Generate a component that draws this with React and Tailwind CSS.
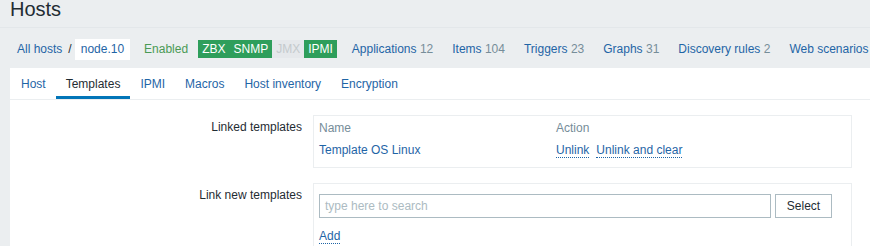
import React from 'react';

const links = [
  ['Applications', '12'],
  ['Items', '104'],
  ['Triggers', '23'],
  ['Graphs', '31'],
  ['Discovery rules', '2'],
  ['Web scenarios', '1'],
];

const tabs = ['Host', 'Templates', 'IPMI', 'Macros', 'Host inventory', 'Encryption'];

export default function App() {
  return (
    <div
      className="w-[870px] h-[246px] overflow-hidden bg-[#ebeef0] text-[12px] leading-[14px] text-[#1f2c33]"
      style={{ fontFamily: '"Liberation Sans", Arial, sans-serif' }}
    >
      {/* title */}
      <div className="h-[28px] border-b border-[#e3e7ea] pl-[10px]">
        <h1 className="text-[20px] leading-[18px] font-normal">Hosts</h1>
      </div>

      {/* breadcrumb + host nav */}
      <div className="h-[40px] pt-[2px] pl-[17px] flex items-center whitespace-nowrap">
        <span className="text-[#1f65a6]">All hosts</span>
        <span className="ml-[6px] mr-[3px] text-[#1f2c33]">/</span>
        <span className="bg-white px-[6px] leading-[21px] text-[#1f65a6]">node.10</span>
        <span className="ml-[14px] text-[#4a9a55]">Enabled</span>
        <div className="ml-[10px] flex leading-[18px] text-white">
          <span className="bg-[#2e9e5b] px-[4px]">ZBX</span>
          <span className="bg-[#2e9e5b] px-[4px]">SNMP</span>
          <span className="bg-[#e5e8eb] px-[4px] text-[#c4cacd]">JMX</span>
          <span className="bg-[#2e9e5b] px-[4px]">IPMI</span>
        </div>
        {links.map(([name, count], i) => (
          <span key={name} className={i === 0 ? 'ml-[15px]' : 'ml-[19px]'}>
            <span className="text-[#1f65a6]">{name}</span>{' '}
            <span className="text-[#768d99]">{count}</span>
          </span>
        ))}
      </div>

      {/* main white panel */}
      <div className="ml-[10px] bg-white h-[200px]">
        <ul className="flex pl-[1px] border-b border-[#ebeef0]">
          {tabs.map((t) => (
            <li
              key={t}
              className={`px-[10px] pt-[9px] pb-[5px] border-b-[3px] ${
                t === 'Templates' ? 'border-[#0275b8] text-[#1f2c33]' : 'border-transparent text-[#1f65a6]'
              }`}
            >
              {t}
            </li>
          ))}
        </ul>

        <div className="pt-[15px] flex flex-col gap-[15px]">
          {/* linked templates */}
          <div className="flex">
            <div className="w-[292px] text-right pt-[5px]">Linked templates</div>
            <div className="ml-[11px] w-[539px] border border-[#ebeef0] px-[5px] pt-[1px] pb-[6px]">
              <div className="flex h-[22px] items-center text-[#768d99]">
                <span className="w-[237px]">Name</span>
                <span>Action</span>
              </div>
              <div className="flex h-[22px] items-center">
                <span className="w-[237px] text-[#1f65a6]">Template OS Linux</span>
                <span className="text-[#1f65a6] border-b border-dotted border-[#1f65a6]">Unlink</span>
                <span className="ml-[7px] text-[#1f65a6] border-b border-dotted border-[#1f65a6]">
                  Unlink and clear
                </span>
              </div>
            </div>
          </div>

          {/* link new templates */}
          <div className="flex">
            <div className="w-[292px] text-right pt-[5px]">Link new templates</div>
            <div className="ml-[11px] w-[539px] h-[80px] border border-[#ebeef0] px-[5px] pt-[10px]">
              <div className="flex">
                <div className="w-[452px] h-[24px] border border-[#acbbc2] px-[5px] flex items-center text-[#acbbc2]">
                  type here to search
                </div>
                <button className="ml-[4px] w-[57px] h-[24px] border border-[#acbbc2] bg-white text-[#1f2c33]">
                  Select
                </button>
              </div>
              <div className="mt-[11px]">
                <span className="text-[#1f65a6] border-b border-dotted border-[#1f65a6]">Add</span>
              </div>
            </div>
          </div>
        </div>
      </div>
    </div>
  );
}
